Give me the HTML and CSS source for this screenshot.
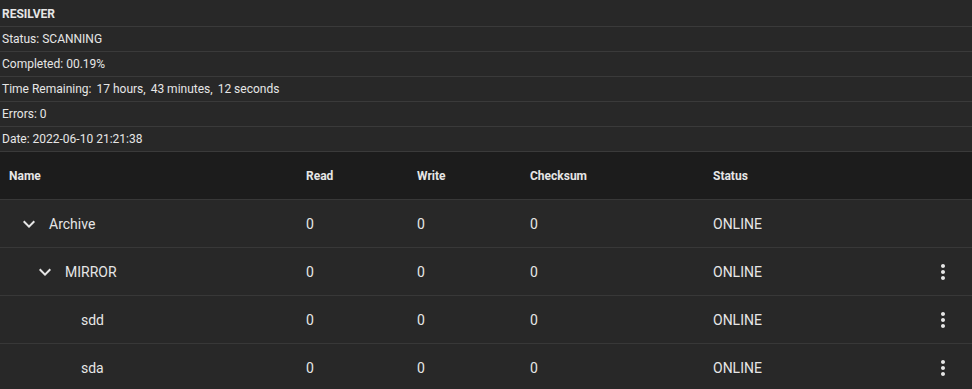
FILE: index.html
```html
<!DOCTYPE html>
<html>
<head>
<meta charset="utf-8">
<link rel="stylesheet" href="styles.css">
</head>
<body>
<div class="panel">
  <div class="info">
    <div class="info-row title">RESILVER</div>
    <div class="info-row">Status: SCANNING</div>
    <div class="info-row">Completed: 00.19%</div>
    <div class="info-row">Time Remaining: <span class="gap">17 hours,</span><span class="gap">43 minutes,</span><span class="gap">12 seconds</span></div>
    <div class="info-row">Errors: 0</div>
    <div class="info-row">Date: 2022-06-10 21:21:38</div>
  </div>
  <div class="table">
    <div class="row head">
      <div class="cell name-h">Name</div>
      <div class="cell">Read</div>
      <div class="cell">Write</div>
      <div class="cell">Checksum</div>
      <div class="cell">Status</div>
      <div class="cell"></div>
    </div>
    <div class="row">
      <div class="cell name lvl0"><svg class="chev" viewBox="0 0 24 24"><path d="M16.59 8.59L12 13.17 7.41 8.59 6 10l6 6 6-6z"/></svg><span>Archive</span></div>
      <div class="cell">0</div>
      <div class="cell">0</div>
      <div class="cell">0</div>
      <div class="cell">ONLINE</div>
      <div class="cell"></div>
    </div>
    <div class="row">
      <div class="cell name lvl1"><svg class="chev" viewBox="0 0 24 24"><path d="M16.59 8.59L12 13.17 7.41 8.59 6 10l6 6 6-6z"/></svg><span>MIRROR</span></div>
      <div class="cell">0</div>
      <div class="cell">0</div>
      <div class="cell">0</div>
      <div class="cell">ONLINE</div>
      <div class="cell act"><svg class="kebab" viewBox="0 0 24 24"><path d="M12 8c1.1 0 2-.9 2-2s-.9-2-2-2-2 .9-2 2 .9 2 2 2zm0 2c-1.1 0-2 .9-2 2s.9 2 2 2 2-.9 2-2-.9-2-2-2zm0 6c-1.1 0-2 .9-2 2s.9 2 2 2 2-.9 2-2-.9-2-2-2z"/></svg></div>
    </div>
    <div class="row">
      <div class="cell name lvl2"><span class="spacer"></span><span>sdd</span></div>
      <div class="cell">0</div>
      <div class="cell">0</div>
      <div class="cell">0</div>
      <div class="cell">ONLINE</div>
      <div class="cell act"><svg class="kebab" viewBox="0 0 24 24"><path d="M12 8c1.1 0 2-.9 2-2s-.9-2-2-2-2 .9-2 2 .9 2 2 2zm0 2c-1.1 0-2 .9-2 2s.9 2 2 2 2-.9 2-2-.9-2-2-2zm0 6c-1.1 0-2 .9-2 2s.9 2 2 2 2-.9 2-2-.9-2-2-2z"/></svg></div>
    </div>
    <div class="row">
      <div class="cell name lvl2"><span class="spacer"></span><span>sda</span></div>
      <div class="cell">0</div>
      <div class="cell">0</div>
      <div class="cell">0</div>
      <div class="cell">ONLINE</div>
      <div class="cell act"><svg class="kebab" viewBox="0 0 24 24"><path d="M12 8c1.1 0 2-.9 2-2s-.9-2-2-2-2 .9-2 2 .9 2 2 2zm0 2c-1.1 0-2 .9-2 2s.9 2 2 2 2-.9 2-2-.9-2-2-2zm0 6c-1.1 0-2 .9-2 2s.9 2 2 2 2-.9 2-2-.9-2-2-2z"/></svg></div>
    </div>
  </div>
</div>
</body>
</html>
```
FILE: styles.css
```css
html, body {
  margin: 0;
  padding: 0;
  background: #282828;
}
body {
  font-family: Roboto, "Liberation Sans", sans-serif;
  color: #e6e6e6;
  width: 972px;
  height: 389px;
  overflow: hidden;
}
.panel {
  padding-top: 2px;
}
.info-row {
  height: 25px;
  border-bottom: 1px solid #3a3a3a;
  box-sizing: border-box;
  display: flex;
  align-items: center;
  padding-left: 2px;
  font-size: 12px;
}
.info-row.title {
  font-weight: 700;
}
.gap {
  margin-left: 5px;
}
.table {
  display: flex;
  flex-direction: column;
}
.row {
  display: grid;
  grid-template-columns: 306px 111px 113px 183px 1fr 58px;
  height: 48px;
  border-bottom: 1px solid #383838;
  box-sizing: border-box;
  align-items: center;
  font-size: 14px;
}
.row.head {
  background: #1c1c1c;
  font-size: 12px;
  font-weight: 700;
}
.name-h {
  padding-left: 9px;
}
.name {
  display: flex;
  align-items: center;
}
.lvl0 { padding-left: 17px; }
.lvl1 { padding-left: 33px; }
.lvl2 { padding-left: 49px; }
.chev, .spacer {
  width: 24px;
  height: 24px;
  margin-right: 8px;
  fill: #e6e6e6;
  flex: none;
  display: block;
}
.act {
  display: flex;
  align-items: center;
  justify-content: flex-end;
  padding-right: 17px;
}
.kebab {
  width: 24px;
  height: 24px;
  fill: #e6e6e6;
  display: block;
}
```
